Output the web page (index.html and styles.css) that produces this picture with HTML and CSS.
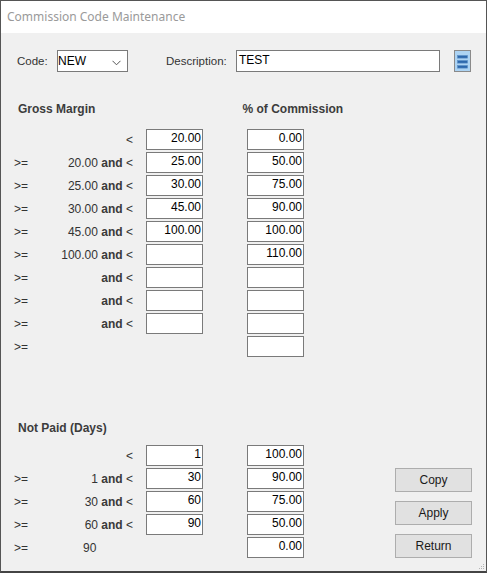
FILE: index.html
```html
<!DOCTYPE html>
<html>
<head>
<meta charset="utf-8">
<title>Commission Code Maintenance</title>
<link rel="stylesheet" href="styles.css">
</head>
<body>
<div class="window">
  <div class="titlebar">Commission Code Maintenance</div>
  <div class="content">
    <div class="toprow">
      <span class="lbl code-lbl">Code:</span>
      <div class="select">
        <span class="select-val">NEW</span>
        <svg class="chev" width="9" height="6" viewBox="0 0 9 6"><path d="M0.5 0.8 L4.5 4.8 L8.5 0.8" fill="none" stroke="#555" stroke-width="1"/></svg>
      </div>
      <span class="lbl desc-lbl">Description:</span>
      <div class="textbox desc">TEST</div>
      <div class="iconbtn">
        <svg width="15" height="20" viewBox="0 0 15 20">
          <rect x="2.5" y="4.5" width="10" height="2.6" fill="#2d68ad" stroke="#5b8fc9" stroke-width="0.6"/>
          <rect x="2.5" y="9.5" width="10" height="2.6" fill="#2d68ad" stroke="#5b8fc9" stroke-width="0.6"/>
          <rect x="2.5" y="14.5" width="10" height="2.6" fill="#2d68ad" stroke="#5b8fc9" stroke-width="0.6"/>
        </svg>
      </div>
    </div>

    <div class="heads">
      <span class="head">Gross Margin</span>
      <span class="head head2">% of Commission</span>
    </div>
    <div class="grid">
      <div></div><div class="mid">&lt;</div><div class="tb">20.00</div><div class="tb">0.00</div>
      <div class="op">&gt;=</div><div class="mid">20.00 <b>and</b> &lt;</div><div class="tb">25.00</div><div class="tb">50.00</div>
      <div class="op">&gt;=</div><div class="mid">25.00 <b>and</b> &lt;</div><div class="tb">30.00</div><div class="tb">75.00</div>
      <div class="op">&gt;=</div><div class="mid">30.00 <b>and</b> &lt;</div><div class="tb">45.00</div><div class="tb">90.00</div>
      <div class="op">&gt;=</div><div class="mid">45.00 <b>and</b> &lt;</div><div class="tb">100.00</div><div class="tb">100.00</div>
      <div class="op">&gt;=</div><div class="mid">100.00 <b>and</b> &lt;</div><div class="tb"></div><div class="tb">110.00</div>
      <div class="op">&gt;=</div><div class="mid"><b>and</b> &lt;</div><div class="tb"></div><div class="tb"></div>
      <div class="op">&gt;=</div><div class="mid"><b>and</b> &lt;</div><div class="tb"></div><div class="tb"></div>
      <div class="op">&gt;=</div><div class="mid"><b>and</b> &lt;</div><div class="tb"></div><div class="tb"></div>
      <div class="op">&gt;=</div><div></div><div></div><div class="tb"></div>
    </div>

    <div class="heads heads-np">
      <span class="head">Not Paid (Days)</span>
    </div>
    <div class="bottom">
      <div class="grid">
        <div></div><div class="mid">&lt;</div><div class="tb">1</div><div class="tb">100.00</div>
        <div class="op">&gt;=</div><div class="mid">1 <b>and</b> &lt;</div><div class="tb">30</div><div class="tb">90.00</div>
        <div class="op">&gt;=</div><div class="mid">30 <b>and</b> &lt;</div><div class="tb">60</div><div class="tb">75.00</div>
        <div class="op">&gt;=</div><div class="mid">60 <b>and</b> &lt;</div><div class="tb">90</div><div class="tb">50.00</div>
        <div class="op">&gt;=</div><div class="mid mid-left">90</div><div></div><div class="tb">0.00</div>
      </div>
      <div class="buttons">
        <button class="btn">Copy</button>
        <button class="btn">Apply</button>
        <button class="btn">Return</button>
      </div>
    </div>
  </div>
  <svg class="grip" width="6" height="6" viewBox="0 0 6 6">
    <rect x="4" y="0" width="1" height="1" fill="#b5b5b5"/>
    <rect x="2" y="2" width="1" height="1" fill="#b5b5b5"/>
    <rect x="4" y="2" width="1" height="1" fill="#b5b5b5"/>
    <rect x="0" y="4" width="1" height="1" fill="#b5b5b5"/>
    <rect x="2" y="4" width="1" height="1" fill="#b5b5b5"/>
    <rect x="4" y="4" width="1" height="1" fill="#b5b5b5"/>
  </svg>
</div>
</body>
</html>
```

FILE: styles.css
```css
* { box-sizing: border-box; }
html, body { margin: 0; padding: 0; background: #f0f0f0; }
body {
  font-family: "Liberation Sans", Arial, sans-serif;
  font-size: 12px;
  color: #222;
}
.window {
  position: relative;
  width: 487px;
  height: 573px;
  background: #f0f0f0;
  border: 1px solid #555;
  border-bottom: 2px solid #444;
  overflow: hidden;
}
.titlebar {
  height: 32px;
  background: #fff;
  padding-left: 6px;
  padding-top: 8px;
  font-family: "Noto Sans", "Liberation Sans", sans-serif;
  font-size: 12px;
  line-height: 16px;
  color: #9a9a9a;
}
.content {
  padding: 17px 14px 0 12px;
}
.toprow {
  display: flex;
  align-items: flex-start;
  height: 22px;
}
.lbl {
  font-size: 11.5px;
  color: #333;
  line-height: 15px;
  padding-top: 4px;
}
.code-lbl { width: 40px; margin-left: 4px; }
.select {
  width: 71px;
  height: 22px;
  border: 1px solid #7a7a7a;
  background: #fff;
  display: flex;
  justify-content: space-between;
  align-items: flex-start;
  padding: 3px 6px 0 0;
}
.select-val { line-height: 15px; color: #000; }
.chev { margin-top: 6px; }
.desc-lbl { width: 70px; margin-left: 38px; }
.textbox {
  height: 22px;
  border: 1px solid #7a7a7a;
  background: #fff;
  color: #000;
  line-height: 15px;
  padding: 2px 2px 0 2px;
}
.desc { width: 204px; }
.iconbtn {
  width: 17px;
  height: 22px;
  margin-left: 14px;
  border: 1px solid #8a8a8a;
  background: #acd3f3;
}
.iconbtn svg { display: block; }
.heads {
  display: flex;
  margin-top: 30px;
  height: 15px;
}
.heads-np { margin-top: 64px; }
.head {
  font-weight: bold;
  color: #3c3c3c;
  line-height: 15px;
  padding-left: 5px;
  width: 231px;
}
.head2 { padding-left: 0; }
.grid {
  display: grid;
  grid-template-columns: 27px 80px 57px 88px;
  grid-auto-rows: 21px;
  column-gap: 13px;
  row-gap: 2px;
  margin-top: 12px;
  width: 291px;
}
.grid > :nth-child(4n+4) { margin-left: 31px; }
.heads-np + .bottom .grid { margin-top: 9px; }
.op, .mid {
  color: #333;
  line-height: 15px;
  padding-top: 4px;
  white-space: nowrap;
}
.op { padding-left: 1px; }
.mid { text-align: right; }
.mid b { font-weight: bold; color: #3a3a3a; }
.mid-left { text-align: left; padding-left: 30px; }
.tb {
  height: 21px;
  border: 1px solid #7a7a7a;
  background: #fff;
  color: #000;
  text-align: right;
  line-height: 15px;
  padding: 1px 1px 0 0;
}
.bottom {
  display: flex;
  justify-content: space-between;
  align-items: flex-end;
}
.buttons {
  display: flex;
  flex-direction: column;
  gap: 9px;
}
.btn {
  width: 77px;
  height: 24px;
  margin: 0;
  border: 1px solid #adadad;
  background: #e1e1e1;
  font-family: "Liberation Sans", Arial, sans-serif;
  font-size: 12px;
  color: #1a1a1a;
  padding: 0;
}
.grip {
  position: absolute;
  right: 1px;
  bottom: 1px;
}
```
